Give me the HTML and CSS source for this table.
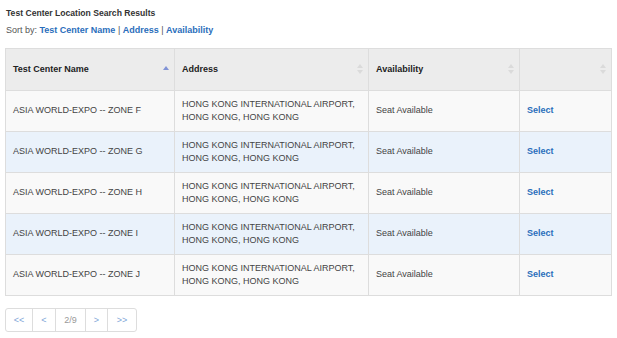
FILE: index.html
```html
<!DOCTYPE html>
<html lang="en">
<head>
  <meta charset="UTF-8">
  <title>Test Center Location Search Results</title>
  <link rel="stylesheet" href="styles.css">
</head>
<body>

<div class="results">
  <h4 class="results-title">Test Center Location Search Results</h4>
  <div class="sort-by">
    Sort by: <a href="#">Test Center Name</a> | <a href="#">Address</a> | <a href="#">Availability</a>
  </div>

  <table class="centers">
    <colgroup>
      <col class="col-name">
      <col class="col-addr">
      <col class="col-avail">
      <col class="col-act">
    </colgroup>
    <thead>
      <tr>
        <th class="sorted-asc">Test Center Name <span class="sort-icon"></span></th>
        <th>Address <span class="sort-icon"></span></th>
        <th>Availability <span class="sort-icon"></span></th>
        <th><span class="sort-icon"></span></th>
      </tr>
    </thead>
    <tbody>
      <tr>
        <td>ASIA WORLD-EXPO -- ZONE F</td>
        <td>HONG KONG INTERNATIONAL AIRPORT,<br>HONG KONG, HONG KONG</td>
        <td>Seat Available</td>
        <td><a href="#">Select</a></td>
      </tr>
      <tr>
        <td>ASIA WORLD-EXPO -- ZONE G</td>
        <td>HONG KONG INTERNATIONAL AIRPORT,<br>HONG KONG, HONG KONG</td>
        <td>Seat Available</td>
        <td><a href="#">Select</a></td>
      </tr>
      <tr>
        <td>ASIA WORLD-EXPO -- ZONE H</td>
        <td>HONG KONG INTERNATIONAL AIRPORT,<br>HONG KONG, HONG KONG</td>
        <td>Seat Available</td>
        <td><a href="#">Select</a></td>
      </tr>
      <tr>
        <td>ASIA WORLD-EXPO -- ZONE I</td>
        <td>HONG KONG INTERNATIONAL AIRPORT,<br>HONG KONG, HONG KONG</td>
        <td>Seat Available</td>
        <td><a href="#">Select</a></td>
      </tr>
      <tr>
        <td>ASIA WORLD-EXPO -- ZONE J</td>
        <td>HONG KONG INTERNATIONAL AIRPORT,<br>HONG KONG, HONG KONG</td>
        <td>Seat Available</td>
        <td><a href="#">Select</a></td>
      </tr>
    </tbody>
  </table>

  <div class="pager">
    <a href="#" class="pg-first">&lt;&lt;</a>
    <a href="#" class="pg-prev">&lt;</a>
    <span class="pg-current">2/9</span>
    <a href="#" class="pg-next">&gt;</a>
    <a href="#" class="pg-last">&gt;&gt;</a>
  </div>
</div>

</body>
</html>
```

FILE: styles.css
```css
:root {
  --text: #444444;
  --link: #2a6ebb;
  --border: #dddddd;
  --head-bg: #ececec;
  --row-odd: #f9f9f9;
  --row-even: #eaf2fb;
}

body {
  margin: 0;
  font-family: "Liberation Sans", Arial, sans-serif;
  font-size: 9px;
  color: var(--text);
  background: #ffffff;
}

.results {
  padding: 7px 6px 0 5px;
}

.results-title {
  margin: 0 0 4px 1px;
  font-size: 8.6px;
  font-weight: bold;
  line-height: 13px;
  color: #333;
}

.sort-by {
  margin-left: 1px;
  font-size: 9px;
  line-height: 13px;
  color: #555;
}

.sort-by a {
  color: var(--link);
  font-weight: bold;
  text-decoration: none;
}

/* Results table */
.centers {
  width: 607px;
  margin-top: 11px;
  border-collapse: collapse;
  border: 1px solid var(--border);
}

.col-name { width: 169px; }
.col-addr { width: 194px; }
.col-avail { width: 151px; }

.centers th,
.centers td {
  border: 1px solid var(--border);
  padding: 0 7px;
  text-align: left;
  vertical-align: middle;
  line-height: 13.5px;
}

.centers th {
  position: relative;
  height: 41px;
  background: var(--head-bg);
  font-weight: bold;
  color: #222;
}

.centers td {
  height: 40px;
}

.centers tbody tr:nth-child(odd) td {
  background: var(--row-odd);
}

.centers tbody tr:nth-child(even) td {
  background: var(--row-even);
}

.centers td a {
  color: var(--link);
  font-weight: bold;
  text-decoration: none;
}

/* Sort indicators in header cells */
.sort-icon {
  position: absolute;
  right: 5px;
  top: 50%;
  width: 6px;
  height: 10px;
  margin-top: -6px;
}

.sort-icon::before,
.sort-icon::after {
  content: "";
  position: absolute;
  left: 0;
  border-left: 3px solid transparent;
  border-right: 3px solid transparent;
}

.sort-icon::before {
  top: 0;
  border-bottom: 4px solid #dadada;
}

.sort-icon::after {
  bottom: 0;
  border-top: 4px solid #dadada;
}

.sorted-asc .sort-icon::before {
  top: 2px;
  border-bottom-color: #8193d6;
}

.sorted-asc .sort-icon::after {
  display: none;
}

/* Pager */
.pager {
  display: inline-flex;
  margin-top: 12px;
  border: 1px solid var(--border);
  border-radius: 3px;
}

.pager a,
.pager span {
  height: 22px;
  line-height: 22px;
  text-align: center;
  font-size: 9px;
  text-decoration: none;
  border-left: 1px solid var(--border);
}

.pager a {
  color: #7fa6d8;
}

.pager span {
  color: #999;
}

.pager .pg-first { width: 26px; border-left: none; }
.pager .pg-prev { width: 22px; }
.pager .pg-current { width: 29px; }
.pager .pg-next { width: 21px; }
.pager .pg-last { width: 28px; }
```
